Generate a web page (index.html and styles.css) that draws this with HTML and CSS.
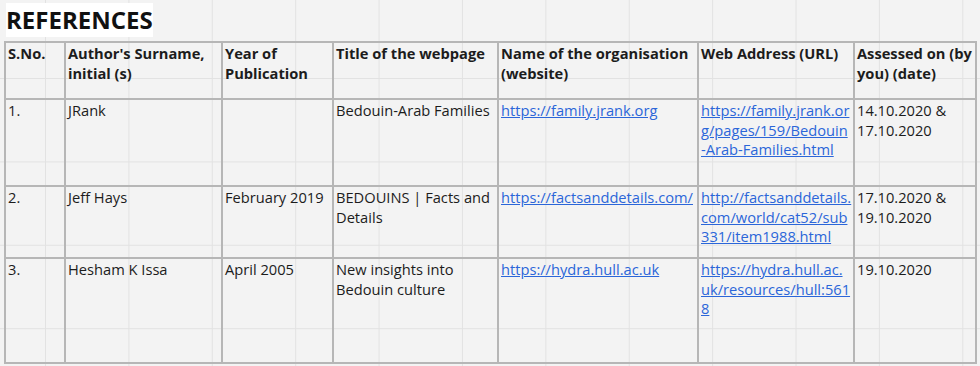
FILE: index.html
```html
<!DOCTYPE html>
<html>
<head>
<meta charset="utf-8">
<link rel="stylesheet" href="styles.css">
</head>
<body>
<div class="sheet">
  <h1 class="title">REFERENCES</h1>
  <table class="refs">
    <colgroup>
      <col class="c1"><col class="c2"><col class="c3"><col class="c4"><col class="c5"><col class="c6"><col class="c7">
    </colgroup>
    <tr class="r0">
      <th>S.No.</th>
      <th>Author's Surname, initial (s)</th>
      <th>Year of Publication</th>
      <th>Title of the webpage</th>
      <th>Name of the organisation (website)</th>
      <th>Web Address (URL)</th>
      <th>Assessed on (by you) (date)</th>
    </tr>
    <tr class="r1">
      <td>1.</td>
      <td>JRank</td>
      <td></td>
      <td>Bedouin-Arab Families</td>
      <td><a href="#">https://family.jrank.org</a></td>
      <td><a href="#">https://family.jrank.or<br>g/pages/159/Bedouin<br>-Arab-Families.html</a></td>
      <td>14.10.2020 &amp; 17.10.2020</td>
    </tr>
    <tr class="r2">
      <td>2.</td>
      <td>Jeff Hays</td>
      <td>February 2019</td>
      <td>BEDOUINS | Facts and Details</td>
      <td><a href="#">https://factsanddetails.com/</a></td>
      <td><a href="#">http://factsanddetails.<br>com/world/cat52/sub<br>331/item1988.html</a></td>
      <td>17.10.2020 &amp; 19.10.2020</td>
    </tr>
    <tr class="r3">
      <td>3.</td>
      <td>Hesham K Issa</td>
      <td>April 2005</td>
      <td>New insights into Bedouin culture</td>
      <td><a href="#">https://hydra.hull.ac.uk</a></td>
      <td><a href="#">https://hydra.hull.ac.<br>uk/resources/hull:561<br>8</a></td>
      <td>19.10.2020</td>
    </tr>
  </table>
</div>
</body>
</html>
```
FILE: styles.css
```css
html, body {
  margin: 0;
  padding: 0;
}
body {
  width: 980px;
  height: 366px;
  overflow: hidden;
  background-color: #f3f3f3;
  background-image:
    linear-gradient(to right, #e2e2e2 1px, transparent 1px),
    linear-gradient(to bottom, #e2e2e2 1px, transparent 1px);
  background-size: 83.4px 83.4px;
  background-position: 45px -5.4px;
  font-family: "Open Sans", "Liberation Sans", sans-serif;
  color: #1c1c1c;
}
.sheet {
  padding: 3px 0 0 4px;
}
.title {
  display: inline-block;
  margin: 0 0 4px 2px;
  padding: 0 0 0 0;
  background: #ffffff;
  font-size: 24px;
  line-height: 34px;
  font-weight: 700;
  color: #111;
}
.refs {
  border-collapse: collapse;
  table-layout: fixed;
  width: 973px;
  font-size: 14.67px;
  line-height: 19.7px;
}
.c1 { width: 60px; }
.c2 { width: 157px; }
.c3 { width: 111px; }
.c4 { width: 165px; }
.c5 { width: 200px; }
.c6 { width: 156px; }
.c7 { width: 122px; }
.refs th, .refs td {
  border: 2px solid #b6b6b6;
  vertical-align: top;
  text-align: left;
  padding: 1px 1px 0 2px;
  white-space: normal;
}
.refs th {
  font-weight: 700;
}
.r0 { height: 57px; }
.r1 { height: 87px; }
.r2 { height: 72px; }
.r3 { height: 105px; }
.refs a {
  color: #2b66d9;
  text-decoration: underline;
}
```
